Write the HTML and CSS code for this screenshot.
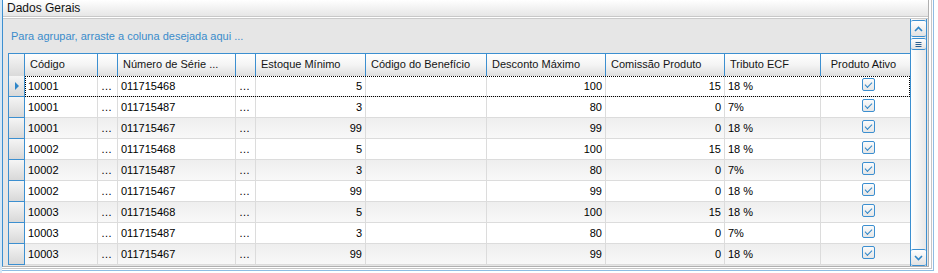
FILE: index.html
```html
<!DOCTYPE html>
<html lang="pt">
<head>
<meta charset="utf-8">
<title>Dados Gerais</title>
<link rel="stylesheet" href="styles.css">
</head>
<body>
<div class="window">
 <div class="frame">
  <div class="frame2">
   <div class="panel">
    <div class="titlebar">Dados Gerais</div>
    <div class="gridctl">
      <div class="gridmain">
        <div class="grouppanel">Para agrupar, arraste a coluna desejada aqui ...</div>
        <div class="table">
          <div class="row head">
            <div class="ind"></div>
            <div class="hc">Código</div>
            <div class="hc"></div>
            <div class="hc">Número de Série ...</div>
            <div class="hc"></div>
            <div class="hc">Estoque Mínimo</div>
            <div class="hc">Código do Benefício</div>
            <div class="hc">Desconto Máximo</div>
            <div class="hc">Comissão Produto</div>
            <div class="hc">Tributo ECF</div>
            <div class="hc center">Produto Ativo</div>
          </div>

          <div class="row data focused">
            <div class="ind"><span class="arrow"></span></div>
            <div class="c">10001</div><div class="c dots">…</div><div class="c">011715468</div><div class="c dots">…</div>
            <div class="c num">5</div><div class="c"></div><div class="c num">100</div><div class="c num">15</div><div class="c">18 %</div>
            <div class="c center"><span class="chk"></span></div>
          </div>
          <div class="row data">
            <div class="ind"></div>
            <div class="c">10001</div><div class="c dots">…</div><div class="c">011715487</div><div class="c dots">…</div>
            <div class="c num">3</div><div class="c"></div><div class="c num">80</div><div class="c num">0</div><div class="c">7%</div>
            <div class="c center"><span class="chk"></span></div>
          </div>
          <div class="row data alt">
            <div class="ind"></div>
            <div class="c">10001</div><div class="c dots">…</div><div class="c">011715467</div><div class="c dots">…</div>
            <div class="c num">99</div><div class="c"></div><div class="c num">99</div><div class="c num">0</div><div class="c">18 %</div>
            <div class="c center"><span class="chk"></span></div>
          </div>
          <div class="row data">
            <div class="ind"></div>
            <div class="c">10002</div><div class="c dots">…</div><div class="c">011715468</div><div class="c dots">…</div>
            <div class="c num">5</div><div class="c"></div><div class="c num">100</div><div class="c num">15</div><div class="c">18 %</div>
            <div class="c center"><span class="chk"></span></div>
          </div>
          <div class="row data alt">
            <div class="ind"></div>
            <div class="c">10002</div><div class="c dots">…</div><div class="c">011715487</div><div class="c dots">…</div>
            <div class="c num">3</div><div class="c"></div><div class="c num">80</div><div class="c num">0</div><div class="c">7%</div>
            <div class="c center"><span class="chk"></span></div>
          </div>
          <div class="row data">
            <div class="ind"></div>
            <div class="c">10002</div><div class="c dots">…</div><div class="c">011715467</div><div class="c dots">…</div>
            <div class="c num">99</div><div class="c"></div><div class="c num">99</div><div class="c num">0</div><div class="c">18 %</div>
            <div class="c center"><span class="chk"></span></div>
          </div>
          <div class="row data alt">
            <div class="ind"></div>
            <div class="c">10003</div><div class="c dots">…</div><div class="c">011715468</div><div class="c dots">…</div>
            <div class="c num">5</div><div class="c"></div><div class="c num">100</div><div class="c num">15</div><div class="c">18 %</div>
            <div class="c center"><span class="chk"></span></div>
          </div>
          <div class="row data">
            <div class="ind"></div>
            <div class="c">10003</div><div class="c dots">…</div><div class="c">011715487</div><div class="c dots">…</div>
            <div class="c num">3</div><div class="c"></div><div class="c num">80</div><div class="c num">0</div><div class="c">7%</div>
            <div class="c center"><span class="chk"></span></div>
          </div>
          <div class="row data alt">
            <div class="ind"></div>
            <div class="c">10003</div><div class="c dots">…</div><div class="c">011715467</div><div class="c dots">…</div>
            <div class="c num">99</div><div class="c"></div><div class="c num">99</div><div class="c num">0</div><div class="c">18 %</div>
            <div class="c center"><span class="chk"></span></div>
          </div>
        </div>
      </div>
      <div class="vscroll">
        <div class="sbtn up"><svg width="9" height="6" viewBox="0 0 9 6"><path d="M1 5 L4.5 1.5 L8 5" fill="none" stroke="#2f86c8" stroke-width="1.6"/></svg></div>
        <div class="sbtn thumb"><svg width="9" height="7" viewBox="0 0 9 7"><path d="M1.5 1.5H7.5M1.5 3.5H7.5M1.5 5.5H7.5" stroke="#2a5f90" stroke-width="1"/></svg></div>
        <div class="track"></div>
        <div class="sbtn down"><svg width="9" height="6" viewBox="0 0 9 6"><path d="M1 1 L4.5 4.5 L8 1" fill="none" stroke="#2f86c8" stroke-width="1.6"/></svg></div>
      </div>
    </div>
   </div>
  </div>
 </div>
</div>
</body>
</html>
```

FILE: styles.css
```css
* { box-sizing: border-box; }
html, body { margin: 0; padding: 0; background: #ffffff; }
body {
  font-family: "Liberation Sans", Arial, sans-serif;
  font-size: 11px;
  color: #000;
  width: 938px;
  height: 273px;
  overflow: hidden;
}
.window {
  width: 938px;
  height: 273px;
  display: flex;
  border-left: 2px solid #d6e7f5;
  padding: 0 4px 2px 0;
  background: #fff;
}
.frame {
  flex: 1;
  display: flex;
  border-right: 1px solid #8ebde3;
  border-bottom: 1px solid #8ebde3;
  padding: 0 1px 1px 0;
}
.frame2 {
  flex: 1;
  display: flex;
  border-right: 1px solid #c6c6c6;
  border-bottom: 1px solid #c6c6c6;
  padding: 0 2px 1px 0;
}
.panel {
  flex: 1;
  display: flex;
  flex-direction: column;
  border-left: 1px solid #3c8fd0;
  border-right: 1px solid #b0b0b0;
  border-bottom: 1px solid #b0b0b0;
}
.titlebar {
  height: 17px;
  line-height: 16px;
  padding-left: 4px;
  background: linear-gradient(#ffffff, #e6e6e6);
  border-bottom: 1px solid #c8c8c8;
  font-size: 12px;
  color: #111;
}
.gridctl {
  flex: 1;
  display: flex;
  margin-top: 1px;
  border-top: 1px solid #cacaca;
  padding-right: 1px;
  background: #e6e6e6;
}
.gridmain {
  flex: 1;
  display: flex;
  flex-direction: column;
  padding-left: 5px;
}
.grouppanel {
  height: 34px;
  padding: 11px 0 0 3px;
  color: #3a8ccb;
}
.table {
  display: flex;
  flex-direction: column;
  background: #fff;
  border-left: 1px solid #3c8fd0;
}
.row {
  display: grid;
  grid-template-columns: 16px 73px 20px 118px 20px 110px 121px 119px 119px 96px 89px;
}
.head {
  height: 23px;
  border-top: 1px solid #3c8fd0;
  background: linear-gradient(#ffffff, #f4f4f4 50%, #dedede);
}
.head .hc {
  border-right: 1px solid #3c8fd0;
  padding-left: 5px;
  line-height: 21px;
  white-space: nowrap;
  overflow: hidden;
  color: #141414;
}
.head .hc:last-child { border-right: none; }
.head .ind {
  border-right: 1px solid #3c8fd0;
  background: linear-gradient(#f6f6f6, #dadada);
}
.center { text-align: center; }
.head .hc.center { padding-left: 0; padding-right: 4px; }
.data {
  height: 21px;
  background: #fff;
}
.data.alt { background: linear-gradient(#eeeeee, #f9f9f9); }
.data .ind {
  border-right: 1px solid #3c8fd0;
  border-bottom: 1px solid #3c8fd0;
  background: linear-gradient(#f5f5f5, #d8d8d8);
  display: flex;
  align-items: center;
  justify-content: center;
}
.data .c {
  border-right: 1px solid #dcdcdc;
  border-bottom: 1px solid #dcdcdc;
  line-height: 20px;
  padding: 0 3px;
  white-space: nowrap;
  overflow: hidden;
}
.data .c:last-child { border-right: none; }
.data .c.num { text-align: right; }
.data.focused { position: relative; }
.data.focused::after {
  content: "";
  position: absolute;
  left: 16px; right: 0; top: 0; bottom: 0;
  border: 1px dotted #000;
  pointer-events: none;
}
.arrow {
  width: 0; height: 0;
  border-top: 4px solid transparent;
  border-bottom: 4px solid transparent;
  border-left: 4px solid #2f86c8;
  margin-left: 1px;
}
.chk {
  display: inline-block;
  width: 13px; height: 13px;
  margin-top: 2px;
  margin-left: 6px;
  border: 1px solid #3c8fd0;
  border-radius: 2px;
  background: linear-gradient(#fbfbfb, #e6e6e6);
  position: relative;
  vertical-align: top;
}
.chk::after {
  content: "";
  position: absolute;
  left: 2px; top: 2px;
  width: 6px; height: 3px;
  border-left: 1.8px solid #2f86c8;
  border-bottom: 1.8px solid #2f86c8;
  transform: translate(0, 1px) rotate(-45deg);
}
.vscroll {
  width: 17px;
  display: flex;
  flex-direction: column;
  border-left: 1px solid #3c8fd0;
  border-right: 1px solid #3c8fd0;
  background: linear-gradient(90deg, #ffffff, #e8e8e8);
}
.sbtn {
  height: 17px;
  border-top: 1px solid #3c8fd0;
  border-bottom: 1px solid #3c8fd0;
  border-radius: 2px;
  background: linear-gradient(#ffffff, #e2e2e2);
  display: flex;
  align-items: center;
  justify-content: center;
}
.sbtn.up { margin-top: 1px; }
.sbtn.thumb { height: 12px; margin-top: 1px; }
.track { flex: 1; }
```
